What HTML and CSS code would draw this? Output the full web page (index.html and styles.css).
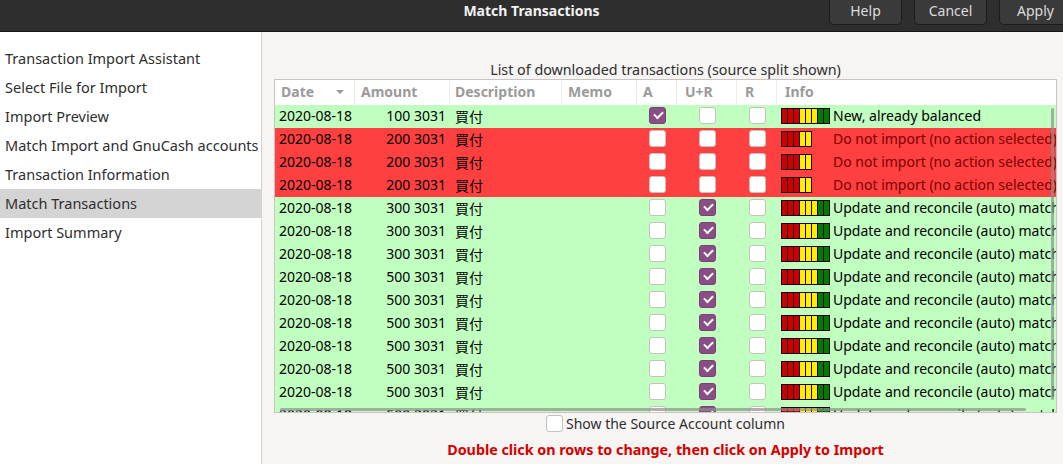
FILE: index.html
```html
<!DOCTYPE html>
<html>
<head>
<meta charset="utf-8">
<link rel="stylesheet" href="styles.css">
</head>
<body>
<header class="titlebar">
  <div class="spacer"></div>
  <div class="title">Match Transactions</div>
  <div class="buttons">
    <button class="btn">Help</button>
    <button class="btn">Cancel</button>
    <button class="btn">Apply</button>
  </div>
</header>
<div class="content">
  <nav class="sidebar">
    <div class="step">Transaction Import Assistant</div>
    <div class="step">Select File for Import</div>
    <div class="step">Import Preview</div>
    <div class="step">Match Import and GnuCash accounts</div>
    <div class="step">Transaction Information</div>
    <div class="step selected">Match Transactions</div>
    <div class="step">Import Summary</div>
  </nav>
  <main class="main">
    <div class="list-title">List of downloaded transactions (source split shown)</div>
    <div class="table">
      <div class="row head">
        <div class="c date">Date <span class="sort"></span></div>
        <div class="c amount-h">Amount</div>
        <div class="c desc">Description</div>
        <div class="c memo">Memo</div>
        <div class="c a-h">A</div>
        <div class="c ur-h">U+R</div>
        <div class="c r-h">R</div>
        <div class="c info">Info</div>
      </div>
      <div class="rows" id="rows">
        <div class="row green">
          <div class="c date">2020-08-18</div><div class="c amount">100 3031</div><div class="c desc">買付</div><div class="c memo"></div>
          <div class="c chk"><span class="cb on"></span></div><div class="c chk"><span class="cb"></span></div><div class="c chk"><span class="cb"></span></div>
          <div class="c info"><span class="bars"><i class="r"></i><i class="r"></i><i class="r"></i><i class="y"></i><i class="y"></i><i class="y"></i><i class="g"></i><i class="g"></i></span>New, already balanced</div>
        </div>
        <div class="row red">
          <div class="c date">2020-08-18</div><div class="c amount">200 3031</div><div class="c desc">買付</div><div class="c memo"></div>
          <div class="c chk"><span class="cb"></span></div><div class="c chk"><span class="cb"></span></div><div class="c chk"><span class="cb"></span></div>
          <div class="c info"><span class="bars"><i class="r"></i><i class="r"></i><i class="r"></i><i class="y"></i><i class="y"></i></span><span class="gap"></span>Do not import (no action selected)</div>
        </div>
        <div class="row red">
          <div class="c date">2020-08-18</div><div class="c amount">200 3031</div><div class="c desc">買付</div><div class="c memo"></div>
          <div class="c chk"><span class="cb"></span></div><div class="c chk"><span class="cb"></span></div><div class="c chk"><span class="cb"></span></div>
          <div class="c info"><span class="bars"><i class="r"></i><i class="r"></i><i class="r"></i><i class="y"></i><i class="y"></i></span><span class="gap"></span>Do not import (no action selected)</div>
        </div>
        <div class="row red">
          <div class="c date">2020-08-18</div><div class="c amount">200 3031</div><div class="c desc">買付</div><div class="c memo"></div>
          <div class="c chk"><span class="cb"></span></div><div class="c chk"><span class="cb"></span></div><div class="c chk"><span class="cb"></span></div>
          <div class="c info"><span class="bars"><i class="r"></i><i class="r"></i><i class="r"></i><i class="y"></i><i class="y"></i></span><span class="gap"></span>Do not import (no action selected)</div>
        </div>
        <div class="row green">
          <div class="c date">2020-08-18</div><div class="c amount">300 3031</div><div class="c desc">買付</div><div class="c memo"></div>
          <div class="c chk"><span class="cb"></span></div><div class="c chk"><span class="cb on"></span></div><div class="c chk"><span class="cb"></span></div>
          <div class="c info"><span class="bars"><i class="r"></i><i class="r"></i><i class="r"></i><i class="y"></i><i class="y"></i><i class="y"></i><i class="g"></i><i class="g"></i></span>Update and reconcile (auto) match</div>
        </div>
        <div class="row green">
          <div class="c date">2020-08-18</div><div class="c amount">300 3031</div><div class="c desc">買付</div><div class="c memo"></div>
          <div class="c chk"><span class="cb"></span></div><div class="c chk"><span class="cb on"></span></div><div class="c chk"><span class="cb"></span></div>
          <div class="c info"><span class="bars"><i class="r"></i><i class="r"></i><i class="r"></i><i class="y"></i><i class="y"></i><i class="y"></i><i class="g"></i><i class="g"></i></span>Update and reconcile (auto) match</div>
        </div>
        <div class="row green">
          <div class="c date">2020-08-18</div><div class="c amount">300 3031</div><div class="c desc">買付</div><div class="c memo"></div>
          <div class="c chk"><span class="cb"></span></div><div class="c chk"><span class="cb on"></span></div><div class="c chk"><span class="cb"></span></div>
          <div class="c info"><span class="bars"><i class="r"></i><i class="r"></i><i class="r"></i><i class="y"></i><i class="y"></i><i class="y"></i><i class="g"></i><i class="g"></i></span>Update and reconcile (auto) match</div>
        </div>
        <div class="row green">
          <div class="c date">2020-08-18</div><div class="c amount">500 3031</div><div class="c desc">買付</div><div class="c memo"></div>
          <div class="c chk"><span class="cb"></span></div><div class="c chk"><span class="cb on"></span></div><div class="c chk"><span class="cb"></span></div>
          <div class="c info"><span class="bars"><i class="r"></i><i class="r"></i><i class="r"></i><i class="y"></i><i class="y"></i><i class="y"></i><i class="g"></i><i class="g"></i></span>Update and reconcile (auto) match</div>
        </div>
        <div class="row green">
          <div class="c date">2020-08-18</div><div class="c amount">500 3031</div><div class="c desc">買付</div><div class="c memo"></div>
          <div class="c chk"><span class="cb"></span></div><div class="c chk"><span class="cb on"></span></div><div class="c chk"><span class="cb"></span></div>
          <div class="c info"><span class="bars"><i class="r"></i><i class="r"></i><i class="r"></i><i class="y"></i><i class="y"></i><i class="y"></i><i class="g"></i><i class="g"></i></span>Update and reconcile (auto) match</div>
        </div>
        <div class="row green">
          <div class="c date">2020-08-18</div><div class="c amount">500 3031</div><div class="c desc">買付</div><div class="c memo"></div>
          <div class="c chk"><span class="cb"></span></div><div class="c chk"><span class="cb on"></span></div><div class="c chk"><span class="cb"></span></div>
          <div class="c info"><span class="bars"><i class="r"></i><i class="r"></i><i class="r"></i><i class="y"></i><i class="y"></i><i class="y"></i><i class="g"></i><i class="g"></i></span>Update and reconcile (auto) match</div>
        </div>
        <div class="row green">
          <div class="c date">2020-08-18</div><div class="c amount">500 3031</div><div class="c desc">買付</div><div class="c memo"></div>
          <div class="c chk"><span class="cb"></span></div><div class="c chk"><span class="cb on"></span></div><div class="c chk"><span class="cb"></span></div>
          <div class="c info"><span class="bars"><i class="r"></i><i class="r"></i><i class="r"></i><i class="y"></i><i class="y"></i><i class="y"></i><i class="g"></i><i class="g"></i></span>Update and reconcile (auto) match</div>
        </div>
        <div class="row green">
          <div class="c date">2020-08-18</div><div class="c amount">500 3031</div><div class="c desc">買付</div><div class="c memo"></div>
          <div class="c chk"><span class="cb"></span></div><div class="c chk"><span class="cb on"></span></div><div class="c chk"><span class="cb"></span></div>
          <div class="c info"><span class="bars"><i class="r"></i><i class="r"></i><i class="r"></i><i class="y"></i><i class="y"></i><i class="y"></i><i class="g"></i><i class="g"></i></span>Update and reconcile (auto) match</div>
        </div>
        <div class="row green">
          <div class="c date">2020-08-18</div><div class="c amount">500 3031</div><div class="c desc">買付</div><div class="c memo"></div>
          <div class="c chk"><span class="cb"></span></div><div class="c chk"><span class="cb on"></span></div><div class="c chk"><span class="cb"></span></div>
          <div class="c info"><span class="bars"><i class="r"></i><i class="r"></i><i class="r"></i><i class="y"></i><i class="y"></i><i class="y"></i><i class="g"></i><i class="g"></i></span>Update and reconcile (auto) match</div>
        </div>
        <div class="row green">
          <div class="c date">2020-08-18</div><div class="c amount">500 3031</div><div class="c desc">買付</div><div class="c memo"></div>
          <div class="c chk"><span class="cb"></span></div><div class="c chk"><span class="cb on"></span></div><div class="c chk"><span class="cb"></span></div>
          <div class="c info"><span class="bars"><i class="r"></i><i class="r"></i><i class="r"></i><i class="y"></i><i class="y"></i><i class="y"></i><i class="g"></i><i class="g"></i></span>Update and reconcile (auto) match</div>
        </div>
        <div class="vscroll"></div>
        <div class="hscroll"></div>
      </div>
    </div>
    <label class="source-opt"><span class="cb plain"></span>Show the Source Account column</label>
    <div class="hint">Double click on rows to change, then click on Apply to Import</div>
  </main>
</div>
</body>
</html>
```
FILE: styles.css
```css
* { box-sizing: border-box; }
html, body { margin: 0; padding: 0; }
body {
  width: 1063px;
  height: 464px;
  overflow: hidden;
  background: #f6f5f4;
  font-family: "Noto Sans", "Noto Sans CJK JP", sans-serif;
  font-size: 14px;
  color: #2e2e2e;
}

.titlebar {
  height: 32px;
  background: #2f2e2e;
  border-bottom: 1px solid #161616;
  display: grid;
  grid-template-columns: 1fr auto 1fr;
  align-items: start;
}
.title {
  color: #f2f2f2;
  font-weight: bold;
  font-size: 14px;
  line-height: 22px;
}
.buttons {
  justify-self: end;
  display: flex;
  gap: 12px;
  margin-right: -9px;
}
.btn {
  width: 73px;
  height: 25px;
  background: #3b3a3a;
  border: 1px solid #1c1c1c;
  border-top: none;
  border-radius: 0 0 5px 5px;
  color: #dcdcdc;
  font-family: inherit;
  font-size: 14px;
  padding: 0 0 3px 0;
}

.content {
  display: flex;
  height: 432px;
}
.sidebar {
  width: 262px;
  flex: none;
  background: #ffffff;
  border-right: 1px solid #d5d0cc;
  padding-top: 12px;
}
.step {
  height: 29px;
  line-height: 29px;
  padding-left: 5px;
  font-size: 14.5px;
  color: #2e2e2e;
  white-space: nowrap;
}
.step.selected { background: #d4d4d4; }

.main {
  flex: 1;
  padding: 29px 6px 0 12px;
  display: flex;
  flex-direction: column;
  align-items: stretch;
}
.list-title {
  text-align: center;
  line-height: 18px;
  font-size: 14.3px;
  color: #2e2e2e;
}
.table {
  border: 1px solid #c9c4bf;
  background: #fff;
  height: 334px;
  display: flex;
  flex-direction: column;
  overflow: hidden;
}
.row {
  display: grid;
  grid-template-columns: 80px 95px 112px 75px 40px 60px 40px 1fr;
  height: 23px;
  padding-bottom: 2px;
  align-items: center;
  white-space: nowrap;
  color: #000;
}
.row.head {
  height: 25px;
  padding-bottom: 0;
  flex: none;
  color: #9a9a9a;
  font-weight: bold;
  background: #fff;
}
.row.head .c { border-right: 1px solid #ececec; height: 25px; line-height: 23px; }
.row.head .c.info { border-right: none; }
.rows {
  position: relative;
  flex: 1;
  overflow: hidden;
}
.row.green { background: #c1ffc1; }
.row.red { background: #ff4040; }
.row.red .info { color: #7a0000; }
.c { overflow: hidden; }
.date { padding-left: 4px; }
.row.head .date { padding-left: 6px; position: relative; }
.sort {
  position: absolute;
  left: 61px;
  top: 10px;
  width: 0; height: 0;
  border-left: 4px solid transparent;
  border-right: 4px solid transparent;
  border-top: 4px solid #9a9a9a;
}
.amount { text-align: right; padding-right: 4px; }
.amount-h { padding-left: 6px; }
.desc { padding-left: 5px; }
.memo { padding-left: 6px; }
.a-h { padding-left: 6px; }
.ur-h { padding-left: 8px; }
.r-h { padding-left: 8px; }
.info { padding-left: 4px; display: flex; align-items: center; overflow: hidden; }
.row.head .info { padding-left: 8px; display: block; }
.chk { display: flex; justify-content: center; align-items: center; }

.cb {
  display: inline-block;
  width: 17px;
  height: 17px;
  border: 1px solid #c6c1bc;
  border-radius: 3px;
  background: #fff;
  position: relative;
}
.cb.on {
  background: #8a4d86;
  border-color: #7a3f76;
}
.cb.on::after {
  content: "";
  position: absolute;
  left: 4px;
  top: 3px;
  width: 7px;
  height: 4px;
  border-left: 2px solid #fff;
  border-bottom: 2px solid #fff;
  transform: rotate(-45deg);
}

.bars {
  display: inline-flex;
  gap: 1px;
  padding: 1px;
  background: #1a0000;
  height: 16px;
  margin-right: 3px;
  flex: none;
}
.bars i { display: block; width: 5px; height: 14px; }
.bars i.r { background: #cc0000; }
.bars i.y { background: #ffee00; }
.bars i.g { background: #007a00; }
.gap { display: inline-block; width: 18px; flex: none; }

.vscroll {
  position: absolute;
  right: 2px;
  top: 3px;
  width: 3px;
  height: 292px;
  background: #8e8e8e;
  border-radius: 2px;
  opacity: 0.7;
}
.hscroll {
  position: absolute;
  left: 5px;
  right: 30px;
  bottom: 1px;
  height: 3px;
  background: #8e8e8e;
  border-radius: 2px;
  opacity: 0.7;
}

.source-opt {
  align-self: center;
  display: flex;
  align-items: center;
  gap: 3px;
  margin-top: 1px;
  height: 19px;
  color: #2e2e2e;
}
.hint {
  margin-top: 8px;
  text-align: center;
  color: #d40000;
  font-weight: bold;
  font-size: 14.3px;
  line-height: 18px;
}
```
